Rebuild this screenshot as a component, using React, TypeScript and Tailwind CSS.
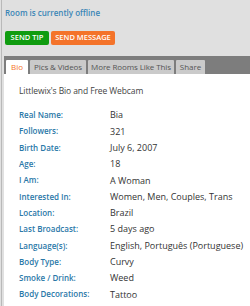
import React from "react";

const rows: [string, string][] = [
  ["Real Name:", "Bia"],
  ["Followers:", "321"],
  ["Birth Date:", "July 6, 2007"],
  ["Age:", "18"],
  ["I Am:", "A Woman"],
  ["Interested In:", "Women, Men, Couples, Trans"],
  ["Location:", "Brazil"],
  ["Last Broadcast:", "5 days ago"],
  ["Language(s):", "English, Português (Portuguese)"],
  ["Body Type:", "Curvy"],
  ["Smoke / Drink:", "Weed"],
  ["Body Decorations:", "Tattoo"],
];

export default function App() {
  return (
    <div
      className="w-[250px] h-[306px] overflow-hidden bg-[#e0e0e0]"
      style={{ fontFamily: '"Open Sans", "DejaVu Sans", sans-serif' }}
    >
      <div className="ml-[1px] h-full border-l border-[#b9b9b9] pl-[2px] flex flex-col">
        <div className="pt-[7px] pl-[1px] text-[8px] font-semibold text-[#3a86b6] leading-[12px] whitespace-nowrap">
          Room is currently offline
        </div>
        <div className="flex gap-[2px] mt-[12px] pl-[1px] shrink-0">
          <div className="h-[14px] w-[44px] flex items-center justify-center rounded-[2px] bg-[#109c10] text-white text-[7.5px] font-semibold whitespace-nowrap">
            SEND TIP
          </div>
          <div className="h-[14px] w-[64px] flex items-center justify-center rounded-[2px] bg-[#f4732a] text-white text-[7.5px] font-semibold whitespace-nowrap">
            SEND MESSAGE
          </div>
        </div>
        <div className="mt-[11px] bg-[#7d7d7d] h-[18px] shrink-0 flex items-end pl-[2px] gap-[2px]">
          <div className="h-[14px] w-[22px] bg-white flex items-center justify-center text-[8px] text-[#f4732a] rounded-t-[1px] whitespace-nowrap">
            Bio
          </div>
          <div className="h-[14px] w-[56px] bg-[#cacaca] flex items-center justify-center text-[8px] tracking-[-0.1px] text-[#555] rounded-t-[1px] whitespace-nowrap">
            Pics &amp; Videos
          </div>
          <div className="h-[14px] w-[86px] bg-[#cacaca] flex items-center justify-center text-[8px] tracking-[-0.1px] text-[#555] rounded-t-[1px] whitespace-nowrap">
            More Rooms Like This
          </div>
          <div className="h-[14px] w-[29px] bg-[#cacaca] flex items-center justify-center text-[8px] text-[#555] rounded-t-[1px] whitespace-nowrap">
            Share
          </div>
        </div>
        <div className="flex-1 bg-white pl-[15px] pt-[10px]">
          <div className="text-[8.5px] tracking-[-0.1px] font-medium text-[#444] leading-[14px] whitespace-nowrap">
            Littlewix's Bio and Free Webcam
          </div>
          <div className="mt-[9px]">
            {rows.map(([k, v]) => (
              <div key={k} className="flex h-[16.3px] items-center text-[9px] whitespace-nowrap">
                <div className="w-[91px] shrink-0 text-[8px] font-semibold text-[#2a78a8]">{k}</div>
                <div className="text-[#333]">{v}</div>
              </div>
            ))}
          </div>
        </div>
      </div>
    </div>
  );
}
